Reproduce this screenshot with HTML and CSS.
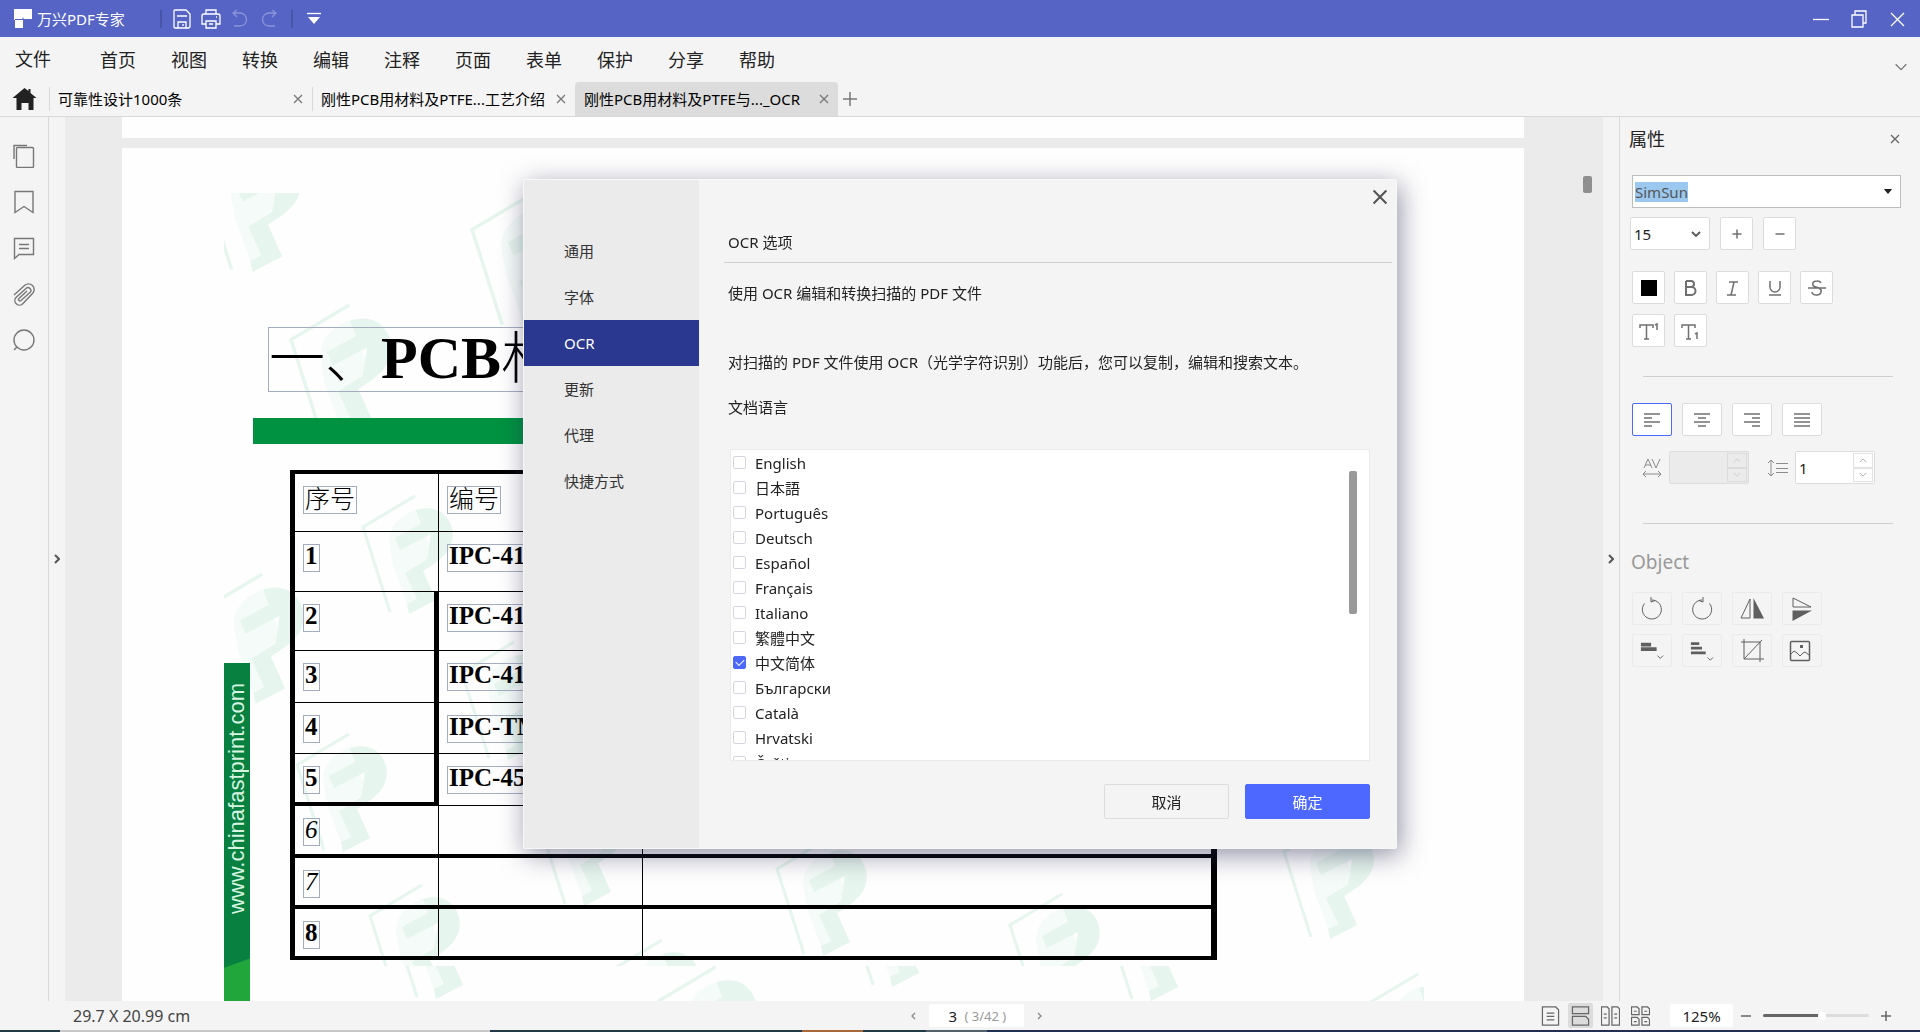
FILE: index.html
```html
<!DOCTYPE html>
<html lang="zh-CN">
<head>
<meta charset="utf-8">
<title>万兴PDF专家</title>
<link rel="stylesheet" href="styles.css">
</head>
<body>
<svg class="defs" aria-hidden="true">
  <symbol id="x" viewBox="0 0 10 10"><path d="M1 1l8 8M9 1l-8 8"/></symbol>
  <symbol id="down" viewBox="0 0 10 6"><path d="M1 1l4 4 4-4"/></symbol>
  <symbol id="up" viewBox="0 0 10 6"><path d="M1 5l4-4 4 4"/></symbol>
  <symbol id="mark" viewBox="0 0 92 118" overflow="visible">
    <path d="M52 0L0 31L27 116" fill="none" stroke="#e6f5ed" stroke-width="3"/>
    <path d="M26 46C26 30 38 18 55 13L58 28L66 48L64 62L42 77L54 103L44 108L30 70Z" fill="#f5fbf8"/>
    <path d="M32 42L58 28L53 14C68 9 84 14 89 32C92 48 86 60 60 75L73 104L46 118L44 108L54 103L42 77L64 63L68 38L37 54Z" fill="#e6f5ed"/>
  </symbol>
</svg>
<div class="app">
  <header class="titlebar">
    <svg class="logo" viewBox="0 0 18 19"><path d="M0 0h18v10H9v9H1v-8H0z" fill="#fff"/><path d="M1 10.500h8v-2" stroke="#5664c6" fill="none"/></svg>
    <span class="app-name">万兴PDF专家</span>
    <span class="bar-sep"></span>
    <button class="tool" aria-label="保存"><svg viewBox="0 0 20 20"><path d="M3 1h11l4 4v12a2 2 0 0 1-2 2H3a1 1 0 0 1-1-1V2a1 1 0 0 1 1-1zM5 7h10M6 19v-6h8v6M11 15v2"/></svg></button>
    <button class="tool" aria-label="打印"><svg viewBox="0 0 20 20"><path d="M5 5V1h10v4M5 15H1V7a2 2 0 0 1 2-2h14a2 2 0 0 1 2 2v8h-4M5 12h10v7H5zM8 15h4M15 8h1"/></svg></button>
    <button class="tool off" aria-label="撤销"><svg viewBox="0 0 20 20"><path d="M7 1L3 4l4 4M3 4h7a6 6 0 0 1 0 13H4"/></svg></button>
    <button class="tool off" aria-label="重做"><svg viewBox="0 0 20 20"><path d="M13 1l4 3-4 4M17 4h-7a6 6 0 0 0 0 13h6"/></svg></button>
    <span class="bar-sep near"></span>
    <button class="tool" aria-label="自定义"><svg viewBox="0 0 20 20"><path d="M3 4.500h14"/><path d="M4 8h12l-6 7z" fill="#fff" stroke="none"/></svg></button>
    <div class="win">
      <button class="tool" aria-label="最小化"><svg viewBox="0 0 20 20"><path d="M2 10.500h16"/></svg></button>
      <button class="tool" aria-label="还原"><svg viewBox="0 0 20 20"><path d="M3 6h11v12H3zM6 6V2h11v12h-3"/></svg></button>
      <button class="tool" aria-label="关闭窗口"><svg viewBox="0 0 20 20"><path d="M4 4l13 13M17 4L4 17"/></svg></button>
    </div>
  </header>

  <nav class="menu">
    <button class="file">文件</button>
    <button>首页</button><button>视图</button><button>转换</button><button>编辑</button><button>注释</button><button>页面</button><button>表单</button><button>保护</button><button>分享</button><button>帮助</button>
    <button class="fold" aria-label="折叠"><svg viewBox="0 0 10 6"><use href="#down"/></svg></button>
  </nav>

  <div class="tabs">
    <button class="home" aria-label="主页"><svg viewBox="0 0 24 22"><path d="M12 0l4 3V1h2v4l6 5h-3v12h-5v-7H9v7H4V10H0z" fill="#222"/></svg></button>
    <div class="tab"><span>可靠性设计1000条</span><button aria-label="关闭"><svg class="ico"><use href="#x"/></svg></button></div>
    <div class="tab"><span>刚性PCB用材料及PTFE...工艺介绍</span><button aria-label="关闭"><svg class="ico"><use href="#x"/></svg></button></div>
    <div class="tab active"><span>刚性PCB用材料及PTFE与..._OCR</span><button aria-label="关闭"><svg class="ico"><use href="#x"/></svg></button></div>
    <button class="add" aria-label="新建"><svg viewBox="0 0 14 14"><path d="M7 0v14M0 7h14"/></svg></button>
  </div>

  <main class="main">
    <aside class="rail">
      <button aria-label="缩略图"><svg viewBox="0 0 24 24"><rect x="4.500" y="3.500" width="17" height="20" rx="1"/><path d="M2 15V1.500h13"/></svg></button>
      <button aria-label="书签"><svg viewBox="0 0 24 24"><path d="M3 1.500h18v21l-9-6-9 6z"/></svg></button>
      <button aria-label="注释"><svg viewBox="0 0 24 24"><path d="M2.500 2.500h19v16H7l-4.500 4zM7 8.500h10M7 12.500h10"/></svg></button>
      <button aria-label="附件"><svg viewBox="0 0 24 24"><path d="M2 13L12.500 3.500a5.600 5.600 0 0 1 8 8L11 21.500a4.500 4.500 0 0 1-7-6L14 6.500a2.600 2.600 0 0 1 4 4L9 18.500a1.300 1.300 0 0 1-2-2l8-7.500"/></svg></button>
      <button aria-label="搜索"><svg viewBox="0 0 24 24"><circle cx="12" cy="12" r="10"/><path d="M5 19l-3 3"/></svg></button>
    </aside>
    <button class="gutter left" aria-label="展开"><svg viewBox="0 0 6 10"><path d="M1 1l4 4-4 4"/></svg></button>

    <section class="viewer">
      <div class="pages">
        <div class="page prev"></div>
        <article class="page">
          <svg class="marks" viewBox="122 148 1402 880" aria-hidden="true">
            <defs>
              <clipPath id="a"><rect x="224" y="193" width="1200" height="773"/></clipPath>
              <clipPath id="b"><rect x="224" y="966" width="1200" height="62"/></clipPath>
            </defs>
            <g clip-path="url(#a)">
              <use href="#mark" x="202" y="142" width="101" height="130"/>
              <use href="#mark" x="291" y="305" width="103" height="132"/>
              <use href="#mark" x="472" y="195" width="103" height="132"/>
              <use href="#mark" x="363" y="496" width="92" height="118"/>
              <use href="#mark" x="205" y="574" width="101" height="130"/>
              <use href="#mark" x="297" y="734" width="92" height="118"/>
              <use href="#mark" x="370" y="885" width="92" height="118"/>
              <use href="#mark" x="462" y="642" width="92" height="118"/>
              <use href="#mark" x="538" y="788" width="92" height="118"/>
              <use href="#mark" x="610" y="940" width="92" height="118"/>
              <use href="#mark" x="777" y="838" width="92" height="118"/>
              <use href="#mark" x="1010" y="894" width="92" height="118"/>
              <use href="#mark" x="1284" y="821" width="92" height="118"/>
            </g>
            <g clip-path="url(#b)">
              <use href="#mark" x="390" y="881" width="92" height="118"/>
              <use href="#mark" x="659" y="967" width="100" height="128"/>
              <use href="#mark" x="846" y="869" width="92" height="118"/>
              <use href="#mark" x="1105" y="883" width="92" height="118"/>
              <use href="#mark" x="1366" y="974" width="92" height="118"/>
            </g>
          </svg>
          <div class="banner"><span>www.chinafastprint.com</span></div>
          <h1 class="slide-title">一、<b>PCB</b>材料</h1>
          <div class="rule"></div>
          <table class="std">
            <colgroup><col class="c1"><col class="c2"><col></colgroup>
            <tbody>
              <tr class="r58"><th><span>序号</span></th><th><span>编号</span></th><th></th></tr>
              <tr class="r60"><td><span><b>1</b></span></td><td><span class="code">IPC-41</span></td><td></td></tr>
              <tr class="r59 heavy"><td><span><b>2</b></span></td><td><span class="code">IPC-41</span></td><td></td></tr>
              <tr class="r52 heavy"><td><span><b>3</b></span></td><td><span class="code">IPC-41</span></td><td></td></tr>
              <tr class="r51 heavy"><td><span><b>4</b></span></td><td><span class="code">IPC-TM</span></td><td></td></tr>
              <tr class="r52 heavy last"><td><span><b>5</b></span></td><td><span class="code">IPC-45</span></td><td></td></tr>
              <tr class="r52 thick"><td><span><i>6</i></span></td><td></td><td></td></tr>
              <tr class="r51 thick"><td><span><i>7</i></span></td><td></td><td></td></tr>
              <tr class="r47"><td><span><b>8</b></span></td><td></td><td></td></tr>
            </tbody>
          </table>
        </article>
      </div>
      <div class="lane"><div class="thumb"></div></div>
    </section>

    <button class="gutter right" aria-label="收起"><svg viewBox="0 0 6 10"><path d="M1 1l4 4-4 4"/></svg></button>
    <aside class="props">
      <div class="props-head"><h2>属性</h2><button aria-label="关闭属性"><svg class="ico"><use href="#x"/></svg></button></div>
      <div class="font"><input aria-label="字体" value="SimSun"><svg viewBox="0 0 10 6"><path d="M0 0h10L5 6z" fill="#222" stroke="none"/></svg></div>
      <div class="row size-row">
        <div class="size"><select aria-label="字号"><option>15</option></select><svg viewBox="0 0 10 6"><use href="#down"/></svg></div>
        <button class="sq" aria-label="增大"><svg viewBox="0 0 20 20"><path d="M10 5.500v9M5.500 10h9"/></svg></button>
        <button class="sq" aria-label="减小"><svg viewBox="0 0 20 20"><path d="M5.500 10h9"/></svg></button>
      </div>
      <div class="row style-row">
        <button class="sq" aria-label="颜色"><span class="swatch"></span></button>
        <button class="sq" aria-label="粗体"><svg viewBox="0 0 20 20"><path d="M5 3v14h5.500a4 4 0 0 0 0-8H5M5 3h5a3 3 0 0 1 0 6" stroke-width="2"/></svg></button>
        <button class="sq" aria-label="斜体"><svg viewBox="0 0 20 20"><path d="M6 4h9M4 17h9M11 4L8 17" stroke-width="1.500"/></svg></button>
        <button class="sq" aria-label="下划线"><svg viewBox="0 0 20 20"><path d="M5 3v6a5 5 0 0 0 10 0V3M4 17h12" stroke-width="1.500"/></svg></button>
        <button class="sq" aria-label="删除线"><svg viewBox="0 0 20 20"><path d="M14 5a4 3 0 0 0-4-2c-5 0-6 5-1 6l3 1c4 2 2 7-2 7a4 3 0 0 1-5-3M1 10h18" stroke-width="1.500"/></svg></button>
      </div>
      <div class="row script-row">
        <button class="sq" aria-label="上标"><svg viewBox="0 0 20 20"><path d="M1 7V4h13v3M7.500 4v14M5 18h5" stroke-width="1.500"/><path d="M16 4l2-1v6"/></svg></button>
        <button class="sq" aria-label="下标"><svg viewBox="0 0 20 20"><path d="M1 7V4h13v3M7.500 4v14M5 18h5" stroke-width="1.500"/><path d="M14 13l2-1v6"/></svg></button>
      </div>
      <hr>
      <div class="row align-row">
        <button class="wide on" aria-label="左对齐"><svg viewBox="0 0 20 20"><path d="M2 4h16M2 8h8M2 12h16M2 16h8"/></svg></button>
        <button class="wide" aria-label="居中"><svg viewBox="0 0 20 20"><path d="M2 4h16M6 8h8M2 12h16M6 16h8"/></svg></button>
        <button class="wide" aria-label="右对齐"><svg viewBox="0 0 20 20"><path d="M2 4h16M10 8h8M2 12h16M10 16h8"/></svg></button>
        <button class="wide" aria-label="两端对齐"><svg viewBox="0 0 20 20"><path d="M2 4h16M2 8h16M2 12h16M2 16h16"/></svg></button>
      </div>
      <div class="row spin-row">
        <svg class="lead" viewBox="0 0 20 20"><path d="M2 10l4-9 4 9M3 7h6M10 1l4 9 4-9M1 16h18M4 13l-3 3 3 3M16 13l3 3-3 3"/></svg>
        <div class="spin dim"><input aria-label="字距" disabled><div><button disabled aria-label="加"><svg viewBox="0 0 10 6"><use href="#up"/></svg></button><button disabled aria-label="减"><svg viewBox="0 0 10 6"><use href="#down"/></svg></button></div></div>
        <svg class="lead" viewBox="0 0 20 20"><path d="M3 2v16M0 5l3-3 3 3M0 15l3 3 3-3M8 5.500h12M8 10.500h12M8 14.500h12"/></svg>
        <div class="spin"><input aria-label="行距" value="1"><div><button aria-label="加"><svg viewBox="0 0 10 6"><use href="#up"/></svg></button><button aria-label="减"><svg viewBox="0 0 10 6"><use href="#down"/></svg></button></div></div>
      </div>
      <hr>
      <h3>Object</h3>
      <div class="objs">
        <button aria-label="逆时针旋转"><svg viewBox="0 0 24 24"><path d="M12 3a9.500 9.500 0 1 1-7.500 3.500M11 0v5l4-1.500"/></svg></button>
        <button aria-label="顺时针旋转"><svg viewBox="0 0 24 24"><path d="M12 3a9.500 9.500 0 1 0 7.500 3.500M13 0v5l-4-1.500"/></svg></button>
        <button aria-label="水平翻转"><svg viewBox="0 0 24 24"><path d="M10 2v19H1z"/><path d="M13.500 1v20.500H24z" fill="#5f5f5f" stroke="none"/></svg></button>
        <button aria-label="垂直翻转"><svg viewBox="0 0 24 24"><path d="M3 1v9h18z"/><path d="M2.500 13.500H22L2.500 24z" fill="#5f5f5f" stroke="none"/></svg></button>
        <button aria-label="对齐"><svg viewBox="0 0 26 24"><path d="M1 5h11M1 10h17" stroke-width="4"/><path d="M19 17l3 3 3-3"/></svg></button>
        <button aria-label="分布"><svg viewBox="0 0 26 24"><path d="M1 4h9M1 9h12M1 14h16" stroke-width="3"/><path d="M19 19l3 3 3-3"/></svg></button>
        <button aria-label="裁剪"><svg viewBox="0 0 24 24"><path d="M4 0v20h20M1 3h19v20M4 20L22 1"/></svg></button>
        <button class="shift" aria-label="替换图片"><svg viewBox="0 0 24 24"><rect x="2.500" y="2.500" width="19" height="19" rx="1" stroke-width="1.500"/><path d="M3 15l3-3 3 2 3 3 3-3 2-1 4 3"/><rect x="12" y="6" width="3" height="3" fill="#5f5f5f" stroke="none"/></svg></button>
      </div>
    </aside>
  </main>

  <footer class="status">
    <span class="dims">29.7 X 20.99 cm</span>
    <div class="pager">
      <button aria-label="上一页"><svg viewBox="0 0 5 8"><path d="M4 1L1 4l3 3"/></svg></button>
      <div class="page-no"><input aria-label="页码" value="3"><span>( 3/42 )</span></div>
      <button aria-label="下一页"><svg viewBox="0 0 5 8"><path d="M1 1l3 3-3 3"/></svg></button>
    </div>
    <div class="zoom">
      <button class="mode" aria-label="单页"><svg viewBox="0 0 20 20"><path d="M1.500 .5h14l3 3v16h-17zM6 7h8M6 10.500h8M6 14h8"/></svg></button>
      <button class="mode on" aria-label="连续"><svg viewBox="0 0 20 20"><path d="M1.500 .5h17v7h-17zM1.500 10.500h14l3 3v6h-17z"/></svg></button>
      <button class="mode" aria-label="双页"><svg viewBox="0 0 20 20"><path d="M.5 .5h6l2 2v17h-8zM11.500 .5h6l2 2v17h-8zM3 8h3M3 12h3M14 8h3M14 12h3"/></svg></button>
      <button class="mode" aria-label="双页连续"><svg viewBox="0 0 20 20"><path d="M.5 .5h6l2 2v6h-8zM11.500 .5h6l2 2v6h-8zM.5 11.500h6l2 2v6h-8zM11.500 11.500h6l2 2v6h-8zM3 5h3M14 5h3M3 16h3M14 16h3"/></svg></button>
      <input class="pct" aria-label="缩放" value="125%">
      <button class="step" aria-label="缩小"><svg viewBox="0 0 10 10"><path d="M0 5h10"/></svg></button>
      <input class="slide" type="range" min="0" max="100" value="56" aria-label="缩放比例">
      <button class="step" aria-label="放大"><svg viewBox="0 0 10 10"><path d="M0 5h10M5 0v10"/></svg></button>
    </div>
  </footer>
  <div class="edge"></div>
</div>

<div class="overlay">
  <section class="dialog" role="dialog" aria-label="OCR 选项">
    <nav class="cats">
      <button>通用</button><button>字体</button><button class="on">OCR</button><button>更新</button><button>代理</button><button>快捷方式</button>
    </nav>
    <div class="body">
      <button class="close" aria-label="关闭对话框"><svg class="ico"><use href="#x"/></svg></button>
      <h2>OCR 选项</h2>
      <p class="lead-text">使用 OCR 编辑和转换扫描的 PDF 文件</p>
      <p class="note">对扫描的 PDF 文件使用 OCR（光学字符识别）功能后，您可以复制，编辑和搜索文本。</p>
      <p class="lang-title">文档语言</p>
      <div class="langs">
        <div class="list">
          <label><input type="checkbox">English</label>
          <label lang="ja"><input type="checkbox">日本語</label>
          <label><input type="checkbox">Português</label>
          <label><input type="checkbox">Deutsch</label>
          <label><input type="checkbox">Español</label>
          <label><input type="checkbox">Français</label>
          <label><input type="checkbox">Italiano</label>
          <label lang="zh-TW"><input type="checkbox">繁體中文</label>
          <label><input type="checkbox" checked>中文简体</label>
          <label><input type="checkbox">Български</label>
          <label><input type="checkbox">Català</label>
          <label><input type="checkbox">Hrvatski</label>
          <label><input type="checkbox">Čeština</label>
        </div>
        <div class="list-thumb"></div>
      </div>
      <div class="acts"><button>取消</button><button class="ok">确定</button></div>
    </div>
  </section>
</div>
</body>
</html>
```

FILE: styles.css
```css
* { box-sizing: border-box; }
body {
  margin: 0;
  font: 15px/20px "Noto Sans", "Noto Sans CJK SC", sans-serif;
  color: #222;
  background: #f4f4f4;
  overflow: hidden;
}
button, input, select { font: inherit; color: inherit; margin: 0; padding: 0; border: 0; background: none; }
input:focus { outline: none; }
h1, h2, h3, p { margin: 0; font-weight: 400; }
svg { display: block; fill: none; stroke: currentColor; }
.defs { position: absolute; width: 0; height: 0; }
.ico { width: 10px; height: 10px; stroke-width: 1.300; }

.app { display: flex; flex-direction: column; height: 100vh; }

/* title bar */
.titlebar { display: flex; align-items: center; gap: 5px; height: 37px; padding: 0 11px 0 14px; background: #5664c6; color: #fff; flex: none; }
.logo { width: 18px; height: 19px; stroke: none; }
.app-name { width: 118px; flex: none; }
.bar-sep { width: 2px; height: 18px; background: #4854a6; margin-right: 3px; }
.bar-sep.near { margin: 0 4px 0 5px; }
.tool { width: 24px; height: 24px; display: grid; place-items: center; }
.tool svg { width: 20px; height: 20px; stroke-width: 1.300; }
.tool.off { color: #8b95da; }
.win { display: flex; gap: 14px; margin-left: auto; }

/* menu */
.menu { display: flex; align-items: center; height: 45px; padding: 0 12px 0 15px; flex: none; font-size: 18px; line-height: 24px; gap: 35px; }
.menu .file { margin-right: 14px; padding-bottom: 2px; }
.menu .fold { margin-left: auto; color: #777; padding-top: 14px; }
.fold svg { width: 14px; height: 8px; }

/* tabs */
.tabs { display: flex; height: 35px; border-bottom: 1px solid #d9d9d9; flex: none; color: #000; }
.home { width: 49px; display: grid; place-items: center; }
.home svg { width: 25px; height: 22px; stroke: none; }
.tab { width: 263px; display: flex; align-items: center; justify-content: space-between; padding: 0 9px; position: relative; }
.tab::before { content: ""; position: absolute; left: 0; top: 5px; bottom: 5px; width: 1px; background: #d9d9d9; }
.tab.active { background: #dcdcdc; border-radius: 4px 4px 0 0; }
.tab.active::before { display: none; }
.tab button { color: #777; }
.tab span { white-space: nowrap; }
.add { padding: 0 5px; color: #777; }
.add svg { width: 14px; height: 14px; stroke-width: 1.500; }

/* main */
.main { flex: 1; min-height: 0; display: flex; }
.rail { width: 49px; border-right: 1px solid #d9d9d9; padding-top: 27px; display: flex; flex-direction: column; align-items: center; gap: 22px; color: #777; flex: none; }
.rail svg { width: 24px; height: 24px; stroke-width: 1.400; }
.gutter { flex: none; display: grid; place-items: center; color: #555; }
.gutter svg { width: 6px; height: 10px; stroke-width: 2; }
.gutter.left { width: 16px; }
.gutter.right { width: 17px; border-right: 1px solid #d9d9d9; }

.viewer { flex: 1; min-width: 0; display: flex; background: #ebebeb; }
.pages { flex: 1; min-width: 0; overflow: hidden; display: flex; flex-direction: column; align-items: center; gap: 10px; }
.lane { width: 22px; flex: none; padding: 59px 0 0 2px; }
.thumb { width: 9px; height: 17px; border-radius: 2px; background: #8f8f8f; }
.page { width: 1402px; flex: none; background: #fefefe; position: relative; padding: 179px 0 60px; }
.page.prev { padding: 0; height: 21px; }
.marks { position: absolute; left: 0; top: 0; width: 1402px; height: 880px; stroke: none; }
.banner { position: absolute; left: 102px; top: 515px; bottom: 0; width: 26px; padding-top: 20px; background: linear-gradient(160deg, #08803f 0 286px, #21a63c 287px); color: #d8f5e2; font: 22px/26px "Liberation Sans", sans-serif; }
.banner span { writing-mode: vertical-rl; transform: rotate(180deg); }
.slide-title { position: relative; width: 760px; height: 65px; margin-left: 146px; border: 1px solid #a4adc0; color: #000; font: 300 56px/60px "Liberation Serif", "Noto Sans CJK SC", serif; white-space: nowrap; }
.slide-title b { font-size: 60px; font-weight: 700; }
.rule { position: relative; width: 1010px; height: 26px; margin: 26px 0 26px 131px; background: #009240; }
.std { position: relative; width: 927px; margin-left: 168px; table-layout: fixed; border-collapse: separate; border-spacing: 0; border: solid #000; border-width: 4px 6px 4px 5px; color: #000; font: 25px/22px "Liberation Serif", "Noto Sans CJK SC", serif; }
.c1 { width: 144px; }
.c2 { width: 204px; }
.std th, .std td { padding: 12px 9px 0 8px; vertical-align: top; text-align: left; font-weight: 300; border: solid #000; border-width: 0 1px 1px 0; overflow: hidden; }
.std tr > :last-child { border-right: 0; }
.std tr:last-child > td { border-bottom: 0; }
.std span { display: inline-block; height: 28px; min-width: 17px; padding: 0 1px; border: 1px solid #a4adc0; white-space: nowrap; vertical-align: top; }
.std th span { line-height: 26px; }
.std b, .std .code { font-weight: 700; }
.std .code { width: 180px; }
.r58 { height: 58px; } .r60 { height: 60px; } .r59 { height: 59px; } .r52 { height: 52px; } .r51 { height: 51px; } .r47 { height: 47px; }
.std .heavy td:first-child { border-right-width: 5px; }
.std .last td:first-child, .std .thick td { border-bottom-width: 4px; }

/* properties */
.props { width: 300px; flex: none; padding: 0 19px 0 12px; }
.props-head { display: flex; align-items: center; justify-content: space-between; height: 44px; margin: 0 1px 14px -3px; }
.props-head h2 { font-size: 18px; line-height: 24px; }
.props-head button { color: #666; }
.font { display: flex; align-items: center; justify-content: space-between; height: 33px; padding: 0 7px 0 2px; border: 1px solid #bdbdbd; background: #fff; }
.font input { field-sizing: content; height: 20px; background: #9bc8ee; color: #555; }
.font svg { width: 10px; height: 5px; }
.row { display: flex; }
.size-row { gap: 10px; margin: 9px 0 21px -2px; }
.sq, .size, .wide, .spin { height: 33px; border: 1px solid #dcdcdc; border-radius: 2px; background: #fff; color: #707070; }
.sq { width: 33px; display: grid; place-items: center; }
.sq svg, .wide svg { width: 20px; height: 20px; stroke-width: 1.500; }
.size { width: 80px; display: grid; grid-template-columns: 1fr 18px; align-items: center; }
.size select { appearance: none; padding-left: 3px; color: #222; }
.size svg { width: 10px; height: 6px; stroke-width: 1.800; color: #555; }
.style-row, .script-row { gap: 9px; margin-bottom: 10px; }
.swatch { width: 16px; height: 16px; background: #000; }
hr { margin: 0 8px 0 11px; border: 0; height: 1px; background: #cfcfcf; }
.script-row + hr { margin-top: 29px; }
.align-row { gap: 10px; margin-top: 26px; }
.wide { width: 40px; display: grid; place-items: center; }
.wide.on { border-color: #4c68ff; }
.spin-row { margin: 15px 0 39px 10px; align-items: center; }
.lead { width: 20px; height: 20px; margin-right: 7px; color: #8b8b8b; }
.spin { width: 80px; display: flex; color: #222; padding: 1px; }
.spin + .lead { margin-left: 19px; }
.spin input { flex: 1; min-width: 0; padding-left: 2px; }
.spin > div { width: 20px; display: flex; flex-direction: column; }
.spin button { flex: 1; display: grid; place-items: center; border: 1px solid #e2e2e2; color: #999; }
.spin svg { width: 8px; height: 5px; }
.spin.dim { background: #ebebeb; }
.spin.dim button { color: #c9c9c9; border-color: #dcdcdc; }
.props h3 { font-size: 19px; line-height: 24px; color: #999; margin: 26px 0 18px -1px; }
.objs { display: grid; grid-template-columns: repeat(4, 40px); gap: 9px 10px; color: #5f5f5f; }
.objs button { height: 33px; border: 1px solid #ebebeb; border-radius: 2px; display: grid; place-items: center; }
.objs svg { width: 24px; height: 24px; }
.objs .shift svg { margin-right: 5px; }

/* status */
.status { flex: none; height: 29px; display: grid; grid-template-columns: 1fr auto 1fr; align-items: center; padding: 0 0 0 32px; color: #444; }
.dims { padding-left: 41px; font-size: 16px; }
.pager { display: flex; align-items: center; gap: 13px; color: #888; }
.pager button svg { width: 5px; height: 8px; stroke-width: 1.300; }
.page-no { display: flex; align-items: center; gap: 6px; width: 95px; height: 23px; padding-left: 20px; background: #fff; font-size: 13px; color: #999; border-radius: 2px; }
.page-no input { width: 10px; color: #222; font-size: 15px; }
.zoom { display: flex; align-items: center; justify-content: flex-end; padding-right: 29px; color: #666; }
.mode { width: 25px; height: 25px; margin-right: 5px; display: grid; place-items: center; border-radius: 2px; }
.mode.on { background: #dcdcdc; }
.mode svg { width: 19px; height: 20px; stroke-width: 1.300; }
.pct { width: 63px; height: 23px; margin: 0 8px 0 12px; background: #fff; text-align: center; color: #222; border-radius: 2px; }
.step svg { width: 10px; height: 10px; stroke-width: 1.500; }
.slide { appearance: none; width: 106px; height: 14px; margin: 0 12px; }
.slide::-webkit-slider-runnable-track { height: 3px; border-radius: 2px; background: linear-gradient(90deg, #666 55%, #dcdcdc 55%); }
.slide::-webkit-slider-thumb { appearance: none; width: 8px; height: 8px; margin-top: -2px; border-radius: 50%; background: #fff; }
.edge { flex: none; height: 2px; background: linear-gradient(90deg, #223a48 60px, #c8c8c8 60px 490px, #223a48 490px 802px, #a8683a 802px 863px, #223a48 863px 926px, #53616d 926px 987px, #1f3050 987px); }

/* dialog */
.overlay { position: fixed; inset: 0; display: grid; place-items: center; padding-bottom: 4px; }
.dialog { display: flex; width: 874px; height: 670px; background: #f4f4f4; border: 1px solid #f7f7f7; border-radius: 2px; box-shadow: 3px 6px 26px rgba(40, 40, 80, .5); color: #333; }
.cats { width: 175px; flex: none; padding-top: 48px; background: #ebebeb; display: flex; flex-direction: column; }
.cats button { height: 46px; padding-left: 40px; text-align: left; }
.cats .on { background: #2b388f; color: #fff; }
.body { flex: 1; min-width: 0; padding: 9px 4px 0 25px; display: flex; flex-direction: column; color: #222; }
.close { align-self: flex-end; margin-right: 4px; color: #555; }
.close .ico { width: 16px; height: 16px; stroke-width: 1.300; }
.body h2 { font-size: 15px; line-height: 20px; padding: 27px 4px 10px; border-bottom: 1px solid #cfcfcf; }
.body p { padding-left: 4px; }
.lead-text { margin-top: 20px; }
.note { margin-top: 49px; }
.lang-title { margin-top: 25px; }
.langs { display: flex; justify-content: space-between; height: 312px; margin: 32px 22px 23px 6px; padding-right: 12px; border: 1px solid #ebebeb; background: #fff; }
.list { overflow: hidden; padding: 0 2px; }
.list label { display: flex; align-items: center; gap: 9px; height: 25px; }
.list [lang="ja"] { font-family: "Noto Sans", "Noto Sans CJK JP", sans-serif; }
.list [lang="zh-TW"] { font-family: "Noto Sans", "Noto Sans CJK TC", sans-serif; }
.list input { appearance: none; width: 13px; height: 13px; border: 1px solid #d6d6e0; border-radius: 2px; background: #fff; display: grid; place-items: center; }
.list input:checked { background: #4c68ff; border-color: #4c68ff; }
.list input:checked::after { content: ""; width: 7px; height: 4px; margin-bottom: 2px; border: solid #fff; border-width: 0 0 1px 1px; transform: rotate(-45deg); }
.list-thumb { width: 8px; height: 143px; margin-top: 21px; border-radius: 2px; background: #999; }
.acts { display: flex; justify-content: flex-end; gap: 16px; margin-right: 22px; }
.acts button { width: 125px; height: 35px; border: 1px solid #dcdcdc; border-radius: 2px; }
.acts .ok { background: #4c68ff; border-color: #4c68ff; color: #fff; }
```
